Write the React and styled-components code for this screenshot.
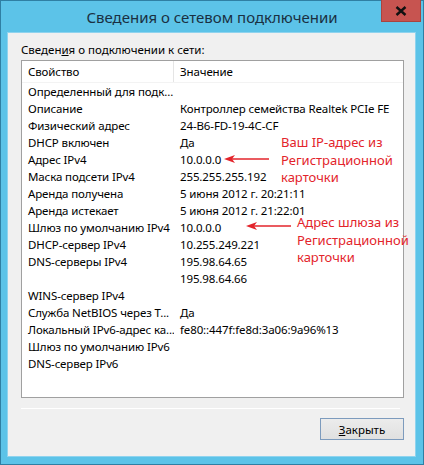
import React from "react";
import styled, { createGlobalStyle } from "styled-components";

const GlobalStyle = createGlobalStyle`
  html, body {
    margin: 0;
    padding: 0;
    background: #ffffff;
  }
  * {
    box-sizing: border-box;
  }
`;

const Window = styled.div`
  width: 424px;
  height: 465px;
  display: flex;
  flex-direction: column;
  background: #5cc3e8;
  border: 1px solid #2f7fa3;
  font-family: "Noto Sans", "DejaVu Sans", sans-serif;
`;

const TitleBar = styled.div`
  height: 31px;
  flex-shrink: 0;
  display: flex;
  align-items: center;
  justify-content: center;
  position: relative;
`;

const Title = styled.div`
  font-size: 15px;
  color: #1a3042;
  padding-top: 1px;
`;

const CloseButton = styled.div`
  position: absolute;
  top: -1px;
  right: 2px;
  width: 40px;
  height: 22px;
  background: #c75450;
  border: 1px solid #a94440;
  border-top: none;
  display: flex;
  align-items: center;
  justify-content: center;
`;

const Client = styled.div`
  flex: 1;
  margin: 0 7px 7px 6px;
  background: #f0f0f0;
  border: 1px solid #8fd3ee;
  padding: 9px 11px 0 13px;
  display: flex;
  flex-direction: column;
`;

const GroupLabel = styled.div`
  font-size: 11.5px;
  line-height: 16px;
  color: #000;
  margin-bottom: 2px;
`;

const ListBox = styled.div`
  position: relative;
  height: 338px;
  background: #fff;
  border: 1px solid #a0a0a0;
  font-size: 11.5px;
  letter-spacing: -0.12px;
  color: #000;
`;

const HeaderRow = styled.div`
  display: flex;
  height: 22px;
  align-items: center;
  border-bottom: 1px solid #f3f3f3;
`;

const HeaderCell = styled.div`
  width: ${(p) => p.$w || "auto"};
  flex: ${(p) => (p.$w ? "none" : 1)};
  height: 100%;
  display: flex;
  align-items: center;
  padding-left: 6px;
  border-right: ${(p) => (p.$w ? "1px solid #e5e5e5" : "none")};
`;

const Row = styled.div`
  display: flex;
  height: 17px;
  align-items: center;
  white-space: nowrap;
`;

const Cell = styled.div`
  width: ${(p) => p.$w || "auto"};
  flex: ${(p) => (p.$w ? "none" : 1)};
  min-width: 0;
  padding-left: 6px;
  overflow: hidden;
`;

const Note = styled.div`
  position: absolute;
  left: ${(p) => p.$x}px;
  top: ${(p) => p.$y}px;
  color: #e3242b;
  font-size: 13px;
  letter-spacing: 0;
  line-height: 17.5px;
  white-space: nowrap;
`;

const Arrow = styled.svg`
  position: absolute;
  left: ${(p) => p.$x}px;
  top: ${(p) => p.$y}px;
`;

const Separator = styled.div`
  height: 1px;
  background: #d8d8d8;
  margin-top: 10px;
  margin-right: 4px;
  border-bottom: 1px solid #ffffff;
`;

const Footer = styled.div`
  display: flex;
  justify-content: flex-end;
  margin-top: 9px;
`;

const Button = styled.div`
  width: 84px;
  height: 22px;
  display: flex;
  align-items: center;
  justify-content: center;
  font-size: 11.5px;
  color: #000;
  background: linear-gradient(#ececec, #e0e0e0);
  border: 1px solid #7d9bbd;
`;

const rows = [
  ["Определенный для подк...", ""],
  ["Описание", "Контроллер семейства Realtek PCIe FE"],
  ["Физический адрес", "24-B6-FD-19-4C-CF"],
  ["DHCP включен", "Да"],
  ["Адрес IPv4", "10.0.0.0"],
  ["Маска подсети IPv4", "255.255.255.192"],
  ["Аренда получена", "5 июня 2012 г. 20:21:11"],
  ["Аренда истекает", "5 июня 2012 г. 21:22:01"],
  ["Шлюз по умолчанию IPv4", "10.0.0.0"],
  ["DHCP-сервер IPv4", "10.255.249.221"],
  ["DNS-серверы IPv4", "195.98.64.65"],
  ["", "195.98.64.66"],
  ["WINS-сервер IPv4", ""],
  ["Служба NetBIOS через Т...", "Да"],
  ["Локальный IPv6-адрес ка...", "fe80::447f:fe8d:3a06:9a96%13"],
  ["Шлюз по умолчанию IPv6", ""],
  ["DNS-сервер IPv6", ""],
];

const LeftArrow = ({ x, y, len }) => (
  <Arrow $x={x} $y={y} width={len} height="10" viewBox={`0 0 ${len} 10`}>
    <line x1="3" y1="5" x2={len} y2="5" stroke="#e3242b" strokeWidth="1.6" />
    <path d="M0 5 L11 1 L8 5 L11 9 Z" fill="#e3242b" />
  </Arrow>
);

const App = () => {
  return (
    <>
      <GlobalStyle />
      <Window>
        <TitleBar>
          <Title>Сведения о сетевом подключении</Title>
          <CloseButton>
            <svg width="12" height="10" viewBox="0 0 12 10">
              <path d="M1.5 1 L10.5 9 M10.5 1 L1.5 9" stroke="#111" strokeWidth="2.4" />
            </svg>
          </CloseButton>
        </TitleBar>
        <Client>
          <GroupLabel>
            Сведен<u>и</u>я о подключении к сети:
          </GroupLabel>
          <ListBox>
            <HeaderRow>
              <HeaderCell $w="152px">Свойство</HeaderCell>
              <HeaderCell>Значение</HeaderCell>
            </HeaderRow>
            {rows.map(([name, value], i) => (
              <Row key={i}>
                <Cell $w="152px">{name}</Cell>
                <Cell>{value}</Cell>
              </Row>
            ))}
            <LeftArrow x={202} y={93} len={45} />
            <Note $x={259} $y={73}>
              Ваш IP-адрес из
              <br />
              Регистрационной
              <br />
              карточки
            </Note>
            <LeftArrow x={224} y={160} len={45} />
            <Note $x={275} $y={153}>
              Адрес шлюза из
              <br />
              Регистрационной
              <br />
              карточки
            </Note>
          </ListBox>
          <Separator />
          <Footer>
            <Button>
              <u>З</u>акрыть
            </Button>
          </Footer>
        </Client>
      </Window>
    </>
  );
};

export default App;
